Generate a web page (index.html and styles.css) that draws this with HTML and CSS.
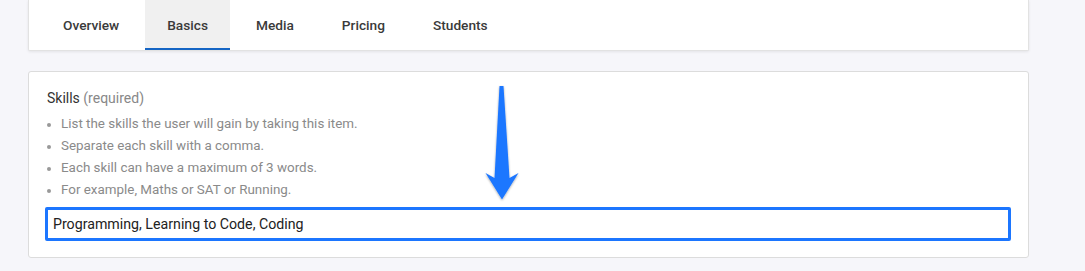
FILE: index.html
```html
<!DOCTYPE html>
<html>
<head>
<meta charset="utf-8">
<link rel="stylesheet" href="styles.css">
</head>
<body>
<div class="page">
  <nav class="tabs-card">
    <a class="tab">Overview</a>
    <a class="tab active">Basics</a>
    <a class="tab">Media</a>
    <a class="tab">Pricing</a>
    <a class="tab">Students</a>
  </nav>
  <section class="skills-card">
    <div class="label">Skills <span class="req">(required)</span></div>
    <ul class="hints">
      <li>List the skills the user will gain by taking this item.</li>
      <li>Separate each skill with a comma.</li>
      <li>Each skill can have a maximum of 3 words.</li>
      <li>For example, Maths or SAT or Running.</li>
    </ul>
    <div class="input">Programming, Learning to Code, Coding</div>
    <svg class="arrow" width="44" height="122" viewBox="480 84 44 122">
      <defs>
        <filter id="sh" x="-30%" y="-10%" width="160%" height="130%">
          <feDropShadow dx="0" dy="1" stdDeviation="1" flood-color="#000" flood-opacity="0.35"/>
        </filter>
      </defs>
      <path d="M499.5 87 L503.5 87 L509.5 179 L518.5 174 L502 200.5 L485.5 174 L494.5 179 Z" fill="#1e77ff" filter="url(#sh)"/>
    </svg>
  </section>
</div>
</body>
</html>
```

FILE: styles.css
```css
* { box-sizing: border-box; }
html, body { margin: 0; padding: 0; }
body {
  background: #f6f6fa;
  font-family: Roboto, "Liberation Sans", Arial, sans-serif;
  font-size: 14px;
  color: #333;
}
.page {
  padding: 0 28px;
  width: 1057px;
}
.tabs-card {
  display: flex;
  gap: 4px;
  height: 51px;
  padding: 0 12px;
  background: #fff;
  border: 1px solid #e2e2e2;
  border-top: 0;
  border-radius: 0 0 2px 2px;
  box-shadow: 0 1px 3px rgba(0,0,0,0.08);
  width: 1001px;
}
.tab {
  display: flex;
  align-items: center;
  padding: 2px 22px 0;
  font-size: 13.7px;
  font-weight: 500;
  color: #3a3a3a;
  border-bottom: 2px solid transparent;
}
.tab.active {
  background: #f0f0f0;
  border-bottom-color: #1565c4;
}
.skills-card {
  position: relative;
  margin-top: 20px;
  width: 1001px;
  background: #fff;
  border: 1px solid #dcdcdc;
  border-radius: 3px;
  padding: 15px 17px 16px 16px;
}
.label {
  line-height: 22px;
  margin: 0 0 4px 2px;
  color: #333;
}
.req { color: #888; }
.hints {
  list-style: none;
  margin: 0 0 6px;
  padding: 0;
}
.hints li {
  display: flex;
  align-items: center;
  line-height: 22px;
  font-size: 13.4px;
  color: #8a8a8a;
}
.hints li::before {
  content: "";
  width: 4px;
  height: 4px;
  border-radius: 50%;
  background: #999;
  margin: 1px 10px 0 2px;
}
.input {
  height: 34px;
  border: 3px solid #1c76ff;
  border-radius: 2px;
  padding: 0 5px;
  display: flex;
  align-items: center;
  font-size: 14.2px;
  color: #222;
}
.arrow {
  position: absolute;
  left: 451px;
  top: 11px;
}
```
